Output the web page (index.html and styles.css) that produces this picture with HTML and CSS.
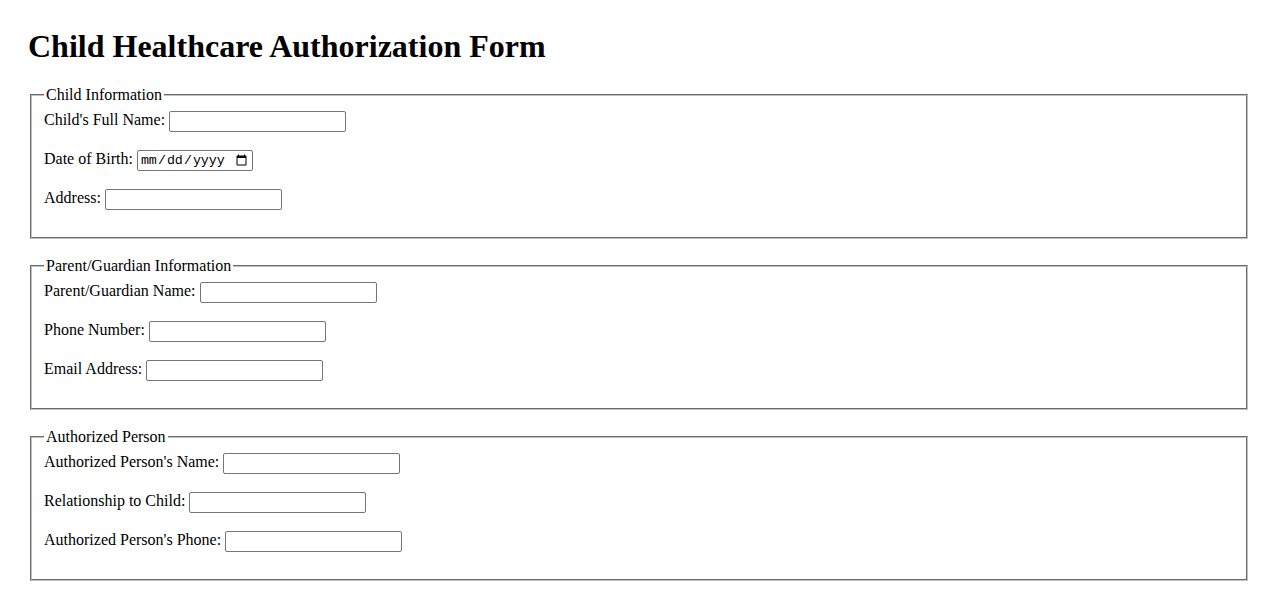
FILE: index.html
```html
<!DOCTYPE html>
<html lang="en">
<head>
<meta charset="utf-8">
<title>Child Healthcare Authorization Form</title>
<link rel="stylesheet" href="styles.css">
</head>
<body>
<h1 class="title">Child Healthcare Authorization Form</h1>
<form class="form">
  <fieldset class="group">
    <legend class="legend">Child Information</legend>
    <div class="row"><label for="childName">Child's Full Name:</label> <input class="field" type="text" id="childName"></div>
    <div class="row"><label for="dob">Date of Birth:</label> <input class="field date" type="date" id="dob"></div>
    <div class="row"><label for="address">Address:</label> <input class="field" type="text" id="address"></div>
  </fieldset>
  <fieldset class="group">
    <legend class="legend">Parent/Guardian Information</legend>
    <div class="row"><label for="parentName">Parent/Guardian Name:</label> <input class="field" type="text" id="parentName"></div>
    <div class="row"><label for="phone">Phone Number:</label> <input class="field" type="tel" id="phone"></div>
    <div class="row"><label for="email">Email Address:</label> <input class="field" type="email" id="email"></div>
  </fieldset>
  <fieldset class="group">
    <legend class="legend">Authorized Person</legend>
    <div class="row"><label for="authName">Authorized Person's Name:</label> <input class="field" type="text" id="authName"></div>
    <div class="row"><label for="relation">Relationship to Child:</label> <input class="field" type="text" id="relation"></div>
    <div class="row"><label for="authPhone">Authorized Person's Phone:</label> <input class="field" type="tel" id="authPhone"></div>
  </fieldset>
</form>
</body>
</html>
```
FILE: styles.css
```css
html { background: #fff; }
body {
  margin: 8px;
  padding: 20px;
  font-family: "Liberation Serif", "Times New Roman", serif;
  font-size: 16px;
  color: #000;
}
.title {
  font-size: 32px;
  font-weight: bold;
  margin: 0 0 21px 0;
  line-height: 37px;
}
.form { margin: 0; }
.group {
  margin: 0 2px 18px 2px;
  padding: 5.1px 12px 10.8px 12px;
  border: 2px groove #c0c0c0;
}
.legend {
  padding: 0 2px;
  line-height: 18px;
}
.row {
  height: 21px;
  line-height: 21px;
  margin-bottom: 18px;
}
.field {
  font-family: "Liberation Sans", Arial, sans-serif;
  font-size: 13.333px;
  width: 177px;
  height: 21px;
  box-sizing: border-box;
  border: 1px solid #767676;
  border-radius: 2px;
  padding: 1px 2px;
  vertical-align: middle;
}
.date {
  font-family: "Liberation Mono", "Courier New", monospace;
  width: 116px;
}
```
